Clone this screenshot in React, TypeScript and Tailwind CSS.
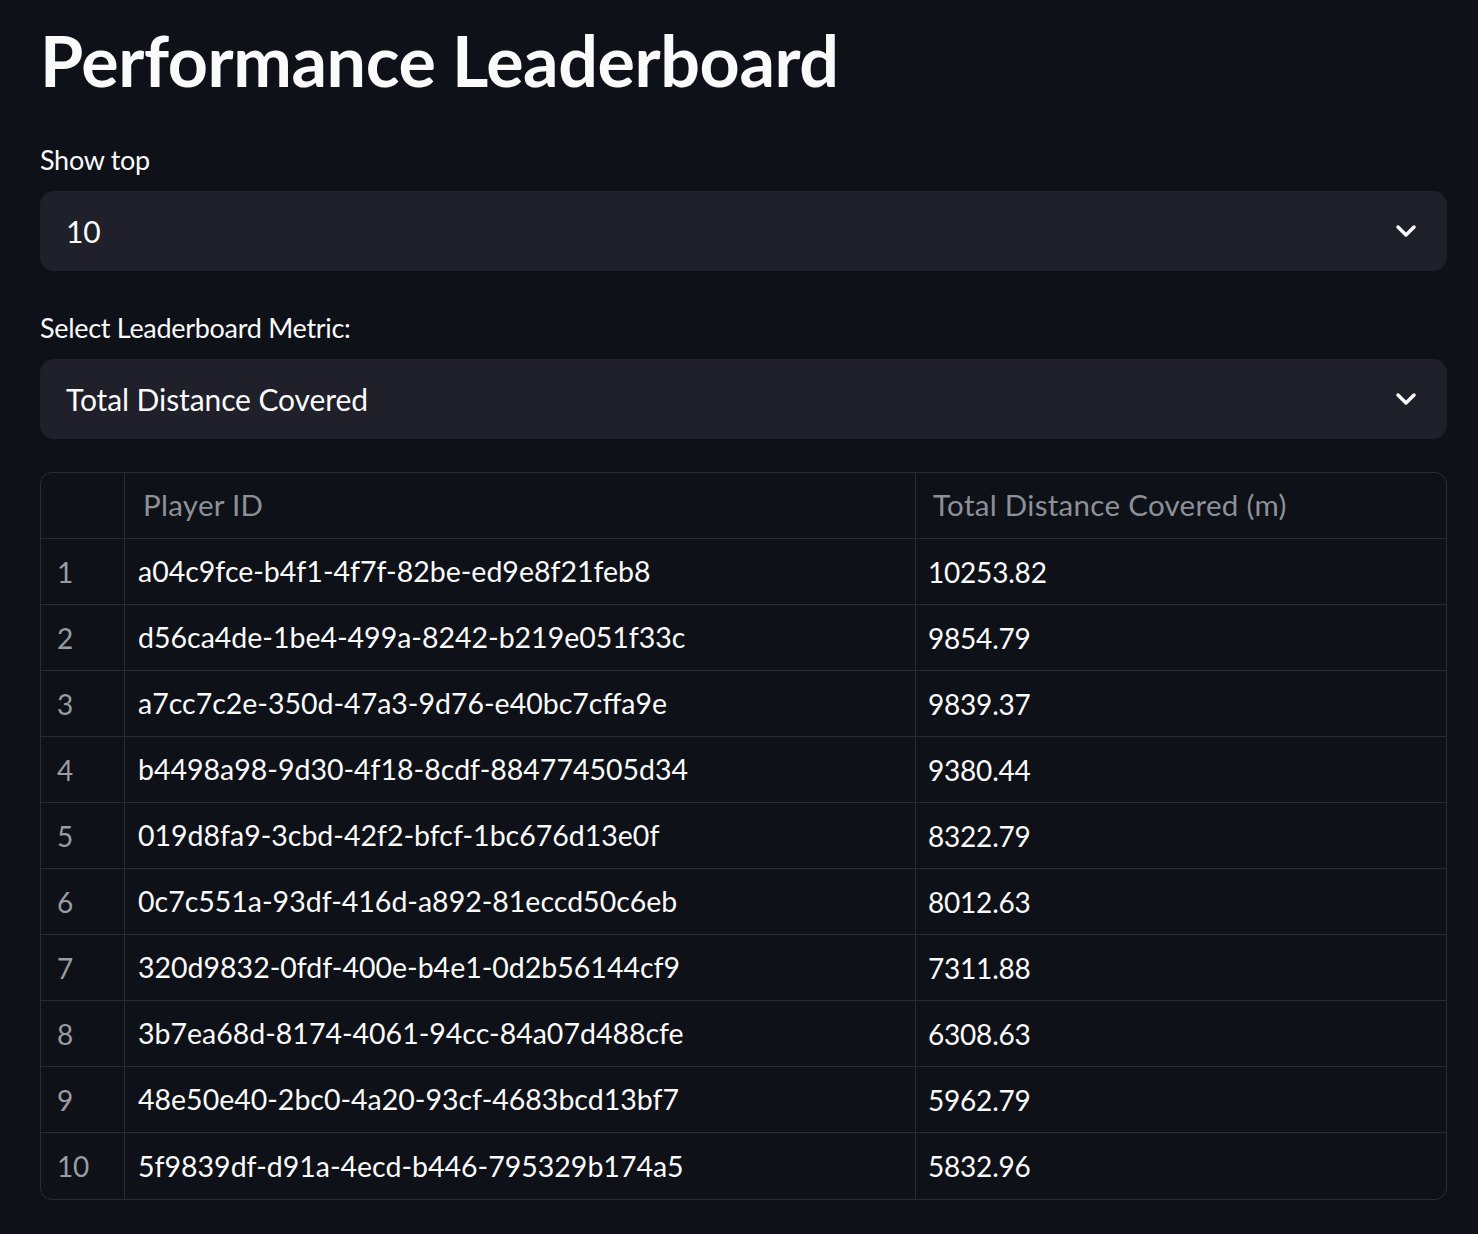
const rows: [string, string][] = [
  ["a04c9fce-b4f1-4f7f-82be-ed9e8f21feb8", "10253.82"],
  ["d56ca4de-1be4-499a-8242-b219e051f33c", "9854.79"],
  ["a7cc7c2e-350d-47a3-9d76-e40bc7cffa9e", "9839.37"],
  ["b4498a98-9d30-4f18-8cdf-884774505d34", "9380.44"],
  ["019d8fa9-3cbd-42f2-bfcf-1bc676d13e0f", "8322.79"],
  ["0c7c551a-93df-416d-a892-81eccd50c6eb", "8012.63"],
  ["320d9832-0fdf-400e-b4e1-0d2b56144cf9", "7311.88"],
  ["3b7ea68d-8174-4061-94cc-84a07d488cfe", "6308.63"],
  ["48e50e40-2bc0-4a20-93cf-4683bcd13bf7", "5962.79"],
  ["5f9839df-d91a-4ecd-b446-795329b174a5", "5832.96"],
];

function Chevron() {
  return (
    <svg width="22" height="14" viewBox="0 0 22 14" fill="none">
      <polyline
        points="3,3 11,11 19,3"
        stroke="#fafafa"
        strokeWidth="3.5"
        strokeLinecap="round"
        strokeLinejoin="round"
      />
    </svg>
  );
}

function SelectBox({ label, value }: { label: string; value: string }) {
  return (
    <div>
      <div className="h-[40px] flex items-center text-[27px] text-[#fafafa] tracking-[-0.3px]">
        {label}
      </div>
      <div className="mt-[11px] h-[80px] rounded-[14px] bg-[#1f2029] flex items-center justify-between pl-[26px] pr-[30px]">
        <span className="text-[30px] text-[#fafafa] tracking-[-0.1px]">{value}</span>
        <Chevron />
      </div>
    </div>
  );
}

export default function App() {
  return (
    <div
      className="min-h-[1234px] bg-[#0e1117] px-[40px] pt-[18px] pb-[36px]"
      style={{ fontFamily: "Lato, 'Open Sans', sans-serif" }}
    >
      <h1 className="text-[70px] leading-[84px] font-bold text-[#fafafa] tracking-[-0.4px]">
        Performance Leaderboard
      </h1>

      <div className="mt-[38px] w-[1407px]">
        <SelectBox label="Show top" value="10" />
      </div>

      <div className="mt-[37px] w-[1407px]">
        <SelectBox label="Select Leaderboard Metric:" value="Total Distance Covered" />
      </div>

      {/* Dataframe */}
      <div className="mt-[33px] w-[1407px] border border-[#2a2c33] rounded-[12px] overflow-hidden">
        <div className="grid grid-cols-[84px_791px_1fr] h-[66px] border-b border-[#2a2c33] text-[29.5px] text-[#8e9097] tracking-[0.3px]">
          <div className="border-r border-[#2a2c33]" />
          <div className="border-r border-[#2a2c33] flex items-center pl-[18px]">Player ID</div>
          <div className="flex items-center pl-[17px]">Total Distance Covered (m)</div>
        </div>
        {rows.map(([id, dist], i) => (
          <div
            key={id}
            className={
              "grid grid-cols-[84px_791px_1fr] h-[66px] text-[28px] " +
              (i < rows.length - 1 ? "border-b border-[#2a2c33]" : "")
            }
          >
            <div className="border-r border-[#2a2c33] flex items-center pl-[16px] text-[#9a9ca2] tracking-[-0.3px]">
              {i + 1}
            </div>
            <div className="border-r border-[#2a2c33] flex items-center pl-[13px] text-[#fafafa] text-[28.5px]">
              {id}
            </div>
            <div className="flex items-center pl-[12px] text-[#fafafa] tracking-[-0.2px]">{dist}</div>
          </div>
        ))}
      </div>
    </div>
  );
}
